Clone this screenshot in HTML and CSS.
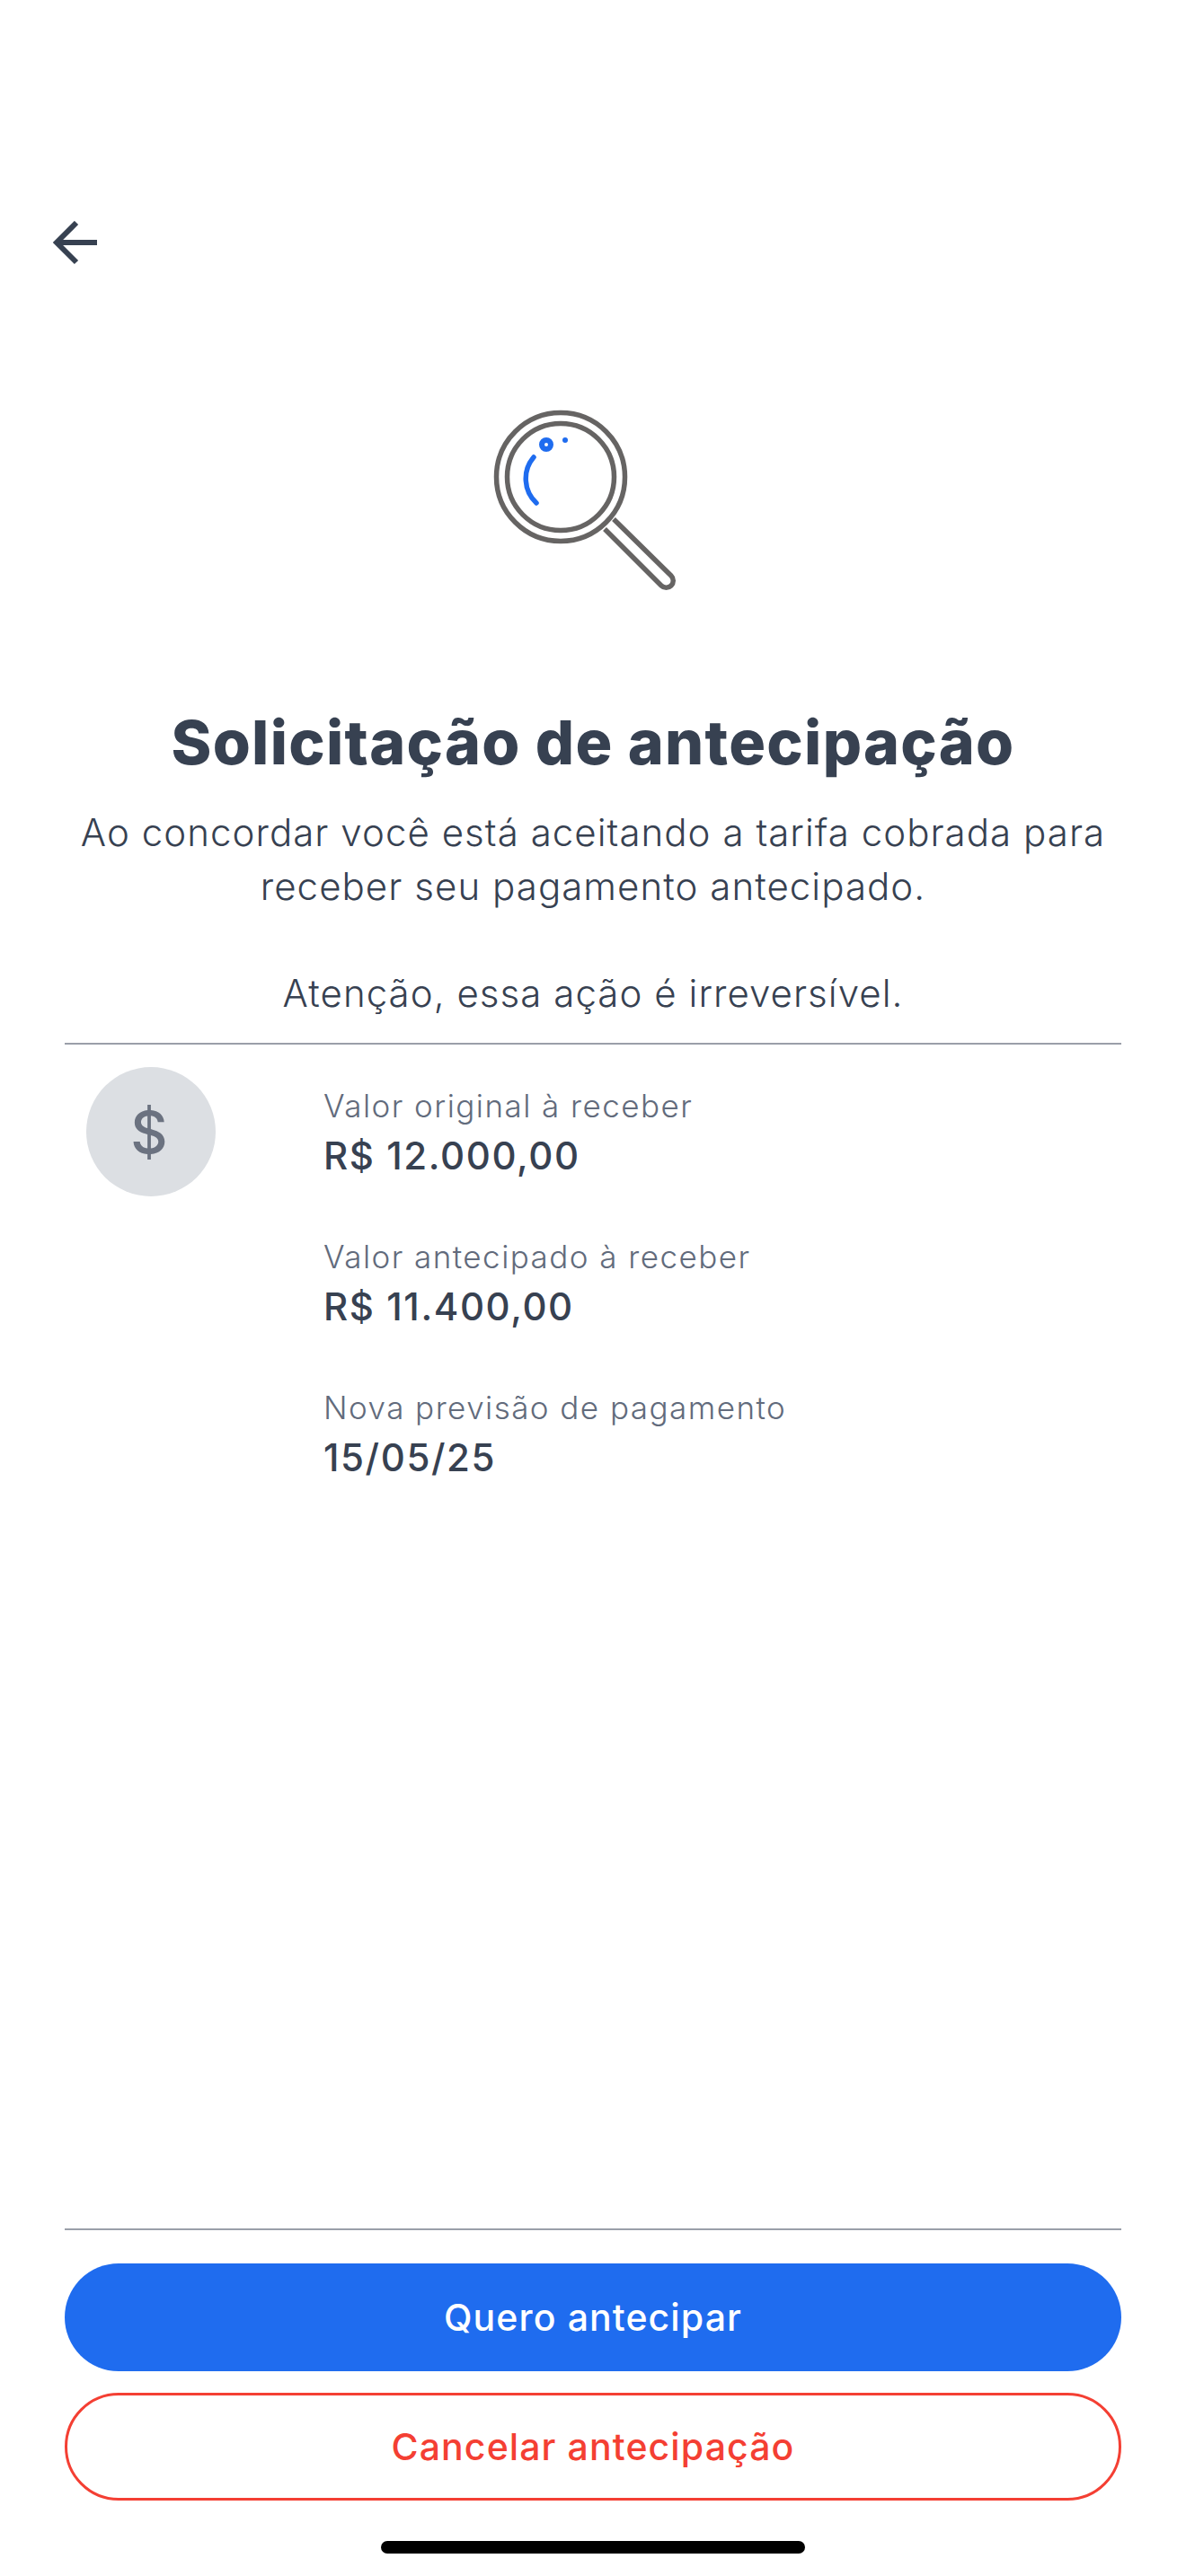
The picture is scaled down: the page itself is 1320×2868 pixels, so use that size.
FILE: index.html
```html
<!DOCTYPE html>
<html lang="pt-BR">
<head>
  <meta charset="utf-8">
  <meta name="viewport" content="width=device-width, initial-scale=1.0">
  <title>Solicitação de antecipação</title>
  <link rel="stylesheet" href="styles.css">
</head>
<body>
  <div id="screen">
    <header class="top-bar">
      <button class="back-btn" aria-label="Voltar">
        <svg width="60" height="60" viewBox="0 0 60 60" fill="none" stroke="#374151" stroke-width="6">
          <path d="M52 24H6"/>
          <path d="M29 2L7 24L29 46"/>
        </svg>
      </button>
    </header>

    <div class="hero">
      <svg class="hero-icon" width="280" height="240" viewBox="0 0 280 240" fill="none">
        <g stroke="#666463" stroke-width="5.5">
          <circle cx="104" cy="101" r="71.5"/>
          <circle cx="104" cy="101" r="59.5"/>
          <path stroke-width="5.5" stroke-linejoin="round" d="M153 159L216 222A7.5 7.5 0 0 0 227 211L163 148"/>
        </g>
        <g stroke="#1f6cef">
          <circle cx="88" cy="65" r="5" stroke-width="6"/>
          <path d="M74 79A37 37 0 0 0 77 130" stroke-width="5.5" stroke-linecap="round"/>
        </g>
        <circle cx="109" cy="60" r="3" fill="#1f6cef"/>
      </svg>
      <h1>Solicitação de antecipação</h1>
      <p class="intro">Ao concordar você está aceitando a tarifa cobrada para<br>receber seu pagamento antecipado.</p>
      <p class="intro warning">Atenção, essa ação é irreversível.</p>
    </div>

    <div class="details">
      <div class="dollar-badge">$</div>
      <div class="detail-list">
        <div class="detail">
          <span class="detail-label">Valor original à receber</span>
          <span class="detail-value">R$ 12.000,00</span>
        </div>
        <div class="detail">
          <span class="detail-label">Valor antecipado à receber</span>
          <span class="detail-value">R$ 11.400,00</span>
        </div>
        <div class="detail">
          <span class="detail-label">Nova previsão de pagamento</span>
          <span class="detail-value">15/05/25</span>
        </div>
      </div>
    </div>

    <footer class="actions">
      <button class="btn btn-primary">Quero antecipar</button>
      <button class="btn btn-outline">Cancelar antecipação</button>
      <div class="home-bar"></div>
    </footer>
  </div>
</body>
</html>
```

FILE: styles.css
```css
* {
  box-sizing: border-box;
}

html, body {
  margin: 0;
  background-color: #fff;
}

body {
  color: #374151;
  font-family: Inter, "Noto Sans", sans-serif;
}

#screen {
  display: flex;
  flex-direction: column;
  height: 2868px;
  padding: 0 72px;
}

.top-bar {
  padding-top: 246px;
}

.back-btn {
  display: block;
  padding: 0;
  margin-left: -16px;
  border: none;
  background: none;
}

.back-btn svg {
  display: block;
}

.hero {
  display: flex;
  flex-direction: column;
  align-items: center;
  padding-top: 124px;
  padding-bottom: 25px;
  border-bottom: 2px solid #9a9fa9;
  text-align: center;
}

.hero-icon {
  display: block;
}

h1 {
  margin: 116px 0 0;
  font-size: 68px;
  line-height: 80px;
  font-weight: 800;
  letter-spacing: 1.3px;
}

.intro {
  margin: 31px 0 0;
  font-size: 42px;
  line-height: 60px;
  font-weight: 300;
  letter-spacing: 1.05px;
}

.warning {
  margin-top: 59px;
}

.details {
  display: flex;
  padding: 25px 0 0 24px;
}

.dollar-badge {
  display: flex;
  align-items: center;
  justify-content: center;
  flex: none;
  width: 144px;
  height: 144px;
  padding-right: 4px;
  border-radius: 50%;
  background-color: #dcdfe3;
  color: #6b7280;
  font-size: 64px;
  font-weight: 500;
}

.detail-list {
  display: flex;
  flex-direction: column;
  gap: 60px;
  padding-top: 19px;
  margin-left: 120px;
}

.detail {
  display: flex;
  flex-direction: column;
  gap: 4px;
}

.detail-label {
  color: #626b7c;
  font-size: 35px;
  line-height: 48px;
  font-weight: 300;
  letter-spacing: 1.45px;
}

.detail-value {
  font-size: 42px;
  line-height: 56px;
  font-weight: 500;
  letter-spacing: 1.6px;
}

.actions {
  display: flex;
  flex-direction: column;
  gap: 24px;
  margin-top: auto;
  padding-top: 37px;
  border-top: 2px solid #9a9fa9;
}

.btn {
  display: block;
  width: 100%;
  height: 120px;
  border-radius: 60px;
  font-family: inherit;
  font-size: 41px;
  font-weight: 500;
  letter-spacing: 1.1px;
}

.btn-primary {
  border: none;
  background-color: #1f6cef;
  color: #fff;
}

.btn-outline {
  border: 3px solid #f43f33;
  background-color: #fff;
  color: #f43f33;
}

.home-bar {
  width: 472px;
  height: 14px;
  margin: 21px auto 25px;
  border-radius: 7px;
  background-color: #000;
}
```
